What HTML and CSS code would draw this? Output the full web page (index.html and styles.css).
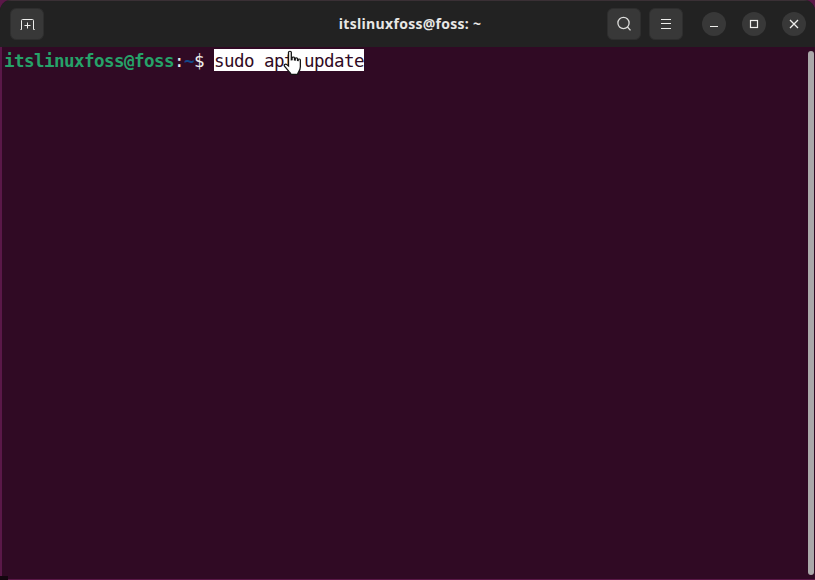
FILE: index.html
```html
<!DOCTYPE html>
<html lang="en">
<head>
<meta charset="utf-8">
<title>itslinuxfoss@foss: ~</title>
<link rel="stylesheet" href="styles.css">
</head>
<body>
<div class="window">
  <header class="titlebar">
    <button class="tool-btn new-tab" aria-label="New tab">
      <svg width="16" height="16" viewBox="0 0 16 16" fill="none" stroke="#eeeeec" stroke-width="1"><path d="M1.5 13.5h1V4.5q0-1 1-1h10q1 0 1 1v9h1.2"/><path d="M8.5 6.5v6M5.5 9.5h6"/></svg>
    </button>
    <div class="title">itslinuxfoss@foss: ~</div>
    <div class="actions">
      <button class="tool-btn" aria-label="Search">
        <svg width="16" height="16" viewBox="0 0 16 16" fill="none" stroke="#dcdcda" stroke-width="1.3"><circle cx="7.5" cy="7" r="5.6"/><path d="M11.5 11l3 3.4"/></svg>
      </button>
      <button class="tool-btn" aria-label="Menu">
        <svg width="16" height="16" viewBox="0 0 16 16" fill="none" stroke="#eeeeec" stroke-width="1"><path d="M3 3.5h10M3 7.5h10M3 12.5h10"/></svg>
      </button>
    </div>
    <div class="win-controls">
      <button class="win-btn" aria-label="Minimize">
        <svg width="12" height="12" viewBox="0 0 12 12" fill="none" stroke="#eeeeec" stroke-width="1"><path d="M2 8.5h8"/></svg>
      </button>
      <button class="win-btn" aria-label="Maximize">
        <svg width="12" height="12" viewBox="0 0 12 12" fill="none" stroke="#eeeeec" stroke-width="1.2"><rect x="2.5" y="2.5" width="7" height="7"/></svg>
      </button>
      <button class="win-btn" aria-label="Close">
        <svg width="12" height="12" viewBox="0 0 12 12" fill="none" stroke="#eeeeec" stroke-width="1.3"><path d="M2 2l8 8M10 2l-8 8"/></svg>
      </button>
    </div>
  </header>
  <main class="terminal">
    <div class="line"><span class="user">itslinuxfoss@foss</span><span class="colon">:</span><span class="path">~</span><span class="colon">$ </span><span class="selected">sudo apt update</span></div>
    <div class="scrollbar"></div>
    <div class="corner-shade"></div>
    <svg class="pointer" width="22" height="27" viewBox="0 0 18 26" preserveAspectRatio="none">
      <path d="M4.5 2.2c0-1.4 2.3-1.4 2.3 0v7.3l.6-.1V7.6c0-1.2 2-1.2 2 0v2l.6.1V8.4c0-1.2 1.9-1.1 1.9.1v1.6l.5.1V9.4c0-1.1 1.8-1 1.8.2v6.6c0 2.5-.6 3.7-1.5 5-.6.9-.7 1.5-.7 2.3H6.6c-.3-1.3-1-2-2-3.1L1.2 15.5c-.8-1.2.7-2.5 1.9-1.5l1.4 1.4z" fill="#fff" stroke="#141414" stroke-width="1.05"/>
    </svg>
  </main>
</div>
</body>
</html>
```
FILE: styles.css
```css
* { box-sizing: border-box; }
html, body { margin: 0; height: 100%; background: #5a1848; overflow: hidden; }
.window {
  position: relative;
  width: 815px;
  height: 580px;
  display: flex;
  flex-direction: column;
  border-radius: 11px 11px 0 0;
  overflow: hidden;
  background: #300a24;
}
.titlebar {
  height: 47px;
  flex: none;
  display: flex;
  align-items: center;
  padding: 0 9px 0 10px;
  background: #222222;
  border-top: 1px solid #3a3035;
  position: relative;
}
button {
  border: 0;
  padding: 0;
  margin: 0;
  display: flex;
  align-items: center;
  justify-content: center;
  color: #eeeeec;
}
.tool-btn {
  width: 34px;
  height: 32px;
  border-radius: 6px;
  background: #383838;
  border: 1px solid #2e2e2e;
}
.title {
  position: absolute;
  left: 0;
  right: 0;
  top: 14px;
  text-align: center;
  font: 700 14px/18px "Open Sans", "Noto Sans", sans-serif;
  color: #e8e8e6;
  letter-spacing: 0.3px;
  padding-left: 5px;
}
.actions { margin-left: auto; display: flex; gap: 8px; position: relative; }
.win-controls { display: flex; gap: 16px; margin-left: 19px; position: relative; }
.win-btn { width: 24px; height: 24px; border-radius: 50%; background: #383838; }
.terminal {
  position: relative;
  flex: 1;
  background: #300a24;
  border-left: 2px solid #5a1848;
  border-bottom: 1px solid #5a1848;
  padding: 2px 0 0 2px;
}
.line {
  font-family: "DejaVu Sans Mono", monospace;
  font-size: 17.5px;
  letter-spacing: -0.54px;
  line-height: 22px;
  white-space: pre;
  color: #eeeeec;
}
.user { color: #26a269; font-weight: 700; }
.path { color: #12488b; font-weight: 700; }
.selected {
  display: inline-block;
  height: 22px;
  padding-top: 1px;
  background: #ffffff;
  color: #300a24;
}
.scrollbar {
  position: absolute;
  right: 1px;
  top: 4px;
  bottom: 4px;
  width: 6px;
  border-radius: 3px;
  background: #aaa8a9;
}
.corner-shade {
  position: absolute;
  left: -2px;
  bottom: -1px;
  width: 8px;
  height: 4px;
  background: #14060f;
}
.pointer { position: absolute; left: 281px; top: 3px; }
```
